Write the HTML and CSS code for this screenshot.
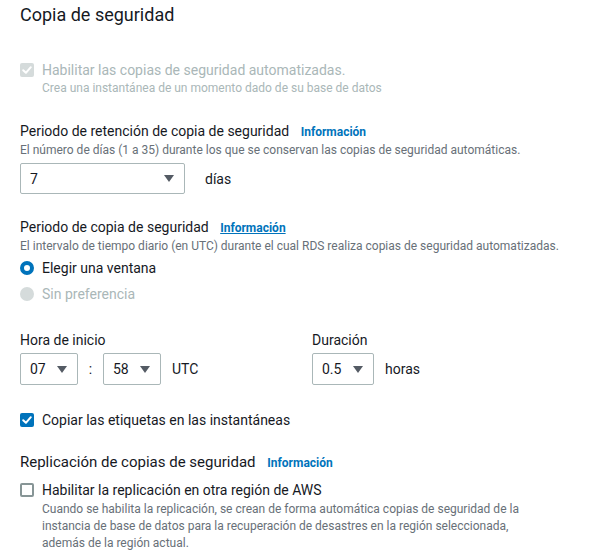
FILE: index.html
```html
<!DOCTYPE html>
<html lang="es">
<head>
<meta charset="utf-8">
<link rel="stylesheet" href="styles.css">
</head>
<body>
<div class="panel">
  <h2 class="title">Copia de seguridad</h2>

  <div class="check-row disabled first">
    <span class="box box-disabled"><svg viewBox="0 0 14 14" width="14" height="14"><path d="M3.2 7.2 L5.9 9.8 L10.8 4.2" fill="none" stroke="#fff" stroke-width="2" stroke-linecap="round" stroke-linejoin="round"/></svg></span>
    <div class="check-text">
      <div class="check-label">Habilitar las copias de seguridad automatizadas.</div>
      <div class="check-desc">Crea una instantánea de un momento dado de su base de datos</div>
    </div>
  </div>

  <div class="field f-retention">
    <div class="label">Periodo de retención de copia de seguridad <a class="info">Información</a></div>
    <div class="desc">El número de días (1 a 35) durante los que se conservan las copias de seguridad automáticas.</div>
    <div class="inline">
      <div class="select w-wide"><span class="val">7</span><span class="caret"></span></div>
      <span class="unit">días</span>
    </div>
  </div>

  <div class="field f-window">
    <div class="label">Periodo de copia de seguridad <a class="info underline">Información</a></div>
    <div class="desc">El intervalo de tiempo diario (en UTC) durante el cual RDS realiza copias de seguridad automatizadas.</div>
    <div class="radio-row first-radio"><span class="radio on"></span><span class="radio-label">Elegir una ventana</span></div>
    <div class="radio-row disabled"><span class="radio off"></span><span class="radio-label">Sin preferencia</span></div>
  </div>

  <div class="time-grid">
    <div class="time-col">
      <div class="label">Hora de inicio</div>
      <div class="inline">
        <div class="select w-small tall"><span class="val">07</span><span class="caret"></span></div>
        <span class="colon">:</span>
        <div class="select w-small tall"><span class="val">58</span><span class="caret"></span></div>
        <span class="unit-s">UTC</span>
      </div>
    </div>
    <div class="time-col">
      <div class="label">Duración</div>
      <div class="inline">
        <div class="select w-dur tall"><span class="val">0.5</span><span class="caret"></span></div>
        <span class="unit-s">horas</span>
      </div>
    </div>
  </div>

  <div class="check-row tags">
    <span class="box box-on"><svg viewBox="0 0 14 14" width="14" height="14"><path d="M3.2 7.2 L5.9 9.8 L10.8 4.2" fill="none" stroke="#fff" stroke-width="2" stroke-linecap="round" stroke-linejoin="round"/></svg></span>
    <div class="check-text"><div class="check-label">Copiar las etiquetas en las instantáneas</div></div>
  </div>

  <div class="field f-repl">
    <div class="label big">Replicación de copias de seguridad <a class="info">Información</a></div>
    <div class="check-row repl">
      <span class="box box-off"></span>
      <div class="check-text">
        <div class="check-label">Habilitar la replicación en otra región de AWS</div>
        <div class="check-desc long">Cuando se habilita la replicación, se crean de forma automática copias de seguridad de la instancia de base de datos para la recuperación de desastres en la región seleccionada, además de la región actual.</div>
      </div>
    </div>
  </div>
</div>
</body>
</html>
```

FILE: styles.css
```css
* { box-sizing: border-box; }
html, body { margin: 0; padding: 0; background: #ffffff; }
body {
  font-family: Roboto, "Open Sans", "Noto Sans", sans-serif;
  color: #16191f;
  font-size: 14px;
  line-height: 20px;
}
.panel { padding: 4px 20px 0 20px; width: 598px; }
.title {
  margin: 0;
  font-size: 18px;
  line-height: 22px;
  font-weight: 400;
}

.check-row { display: flex; align-items: flex-start; gap: 8px; }
.check-row.first { margin-top: 34px; }
.box {
  flex: none;
  width: 14px; height: 14px;
  margin-top: 3px;
  border-radius: 2px;
  display: flex; align-items: center; justify-content: center;
}
.box-disabled { background: #d5dbdb; }
.box-on { background: #0073bb; }
.box-off { border: 2px solid #879596; background: #fff; }
.check-label { font-size: 14px; line-height: 20px; }
.check-desc { font-size: 12px; line-height: 17px; color: #687078; }
.disabled .check-label, .disabled .check-desc { color: #aab7b8; }

.field .label, .time-col .label { font-size: 14px; line-height: 20px; }
.field .label.big { font-size: 15px; }
.info {
  font-size: 12px;
  font-weight: 700;
  color: #0073bb;
  margin-left: 8px;
  text-decoration: none;
}
.info.underline { text-decoration: underline; }
.desc { font-size: 12px; line-height: 17px; color: #687078; }

.f-retention { margin-top: 24px; }
.inline { display: flex; align-items: center; }
.f-retention .inline { margin-top: 4px; }

.select {
  height: 31px;
  border: 1px solid #aab7b8;
  border-radius: 2px;
  display: flex;
  align-items: center;
  justify-content: space-between;
  padding: 0 10px 0 9px;
  font-size: 14px;
}
.select.tall { height: 32px; }
.w-wide { width: 165px; }
.w-small { width: 58px; }
.w-dur { width: 62px; }
.caret {
  width: 0; height: 0;
  border-left: 5px solid transparent;
  border-right: 5px solid transparent;
  border-top: 7px solid #545b64;
}
.unit { margin-left: 20px; }
.unit-s { margin-left: 11px; }
.colon { width: 25px; text-align: center; }

.f-window { margin-top: 23px; }
.radio-row { display: flex; align-items: center; gap: 8px; height: 20px; }
.radio-row.first-radio { margin-top: 3px; }
.radio-row + .radio-row { margin-top: 6px; }
.radio {
  flex: none;
  width: 14px; height: 14px;
  border-radius: 50%;
}
.radio.on { border: 4px solid #0073bb; background: #fff; }
.radio.off { background: #d5dbdb; }
.radio-row.disabled .radio-label { color: #aab7b8; }

.time-grid {
  display: grid;
  grid-template-columns: 292px 1fr;
  margin-top: 26px;
}
.time-col .inline { margin-top: 3px; }

.tags { margin-top: 25px; }
.f-repl { margin-top: 22px; }
.repl { margin-top: 7px; }
.check-desc.long { width: 500px; margin-top: 1px; }
```
